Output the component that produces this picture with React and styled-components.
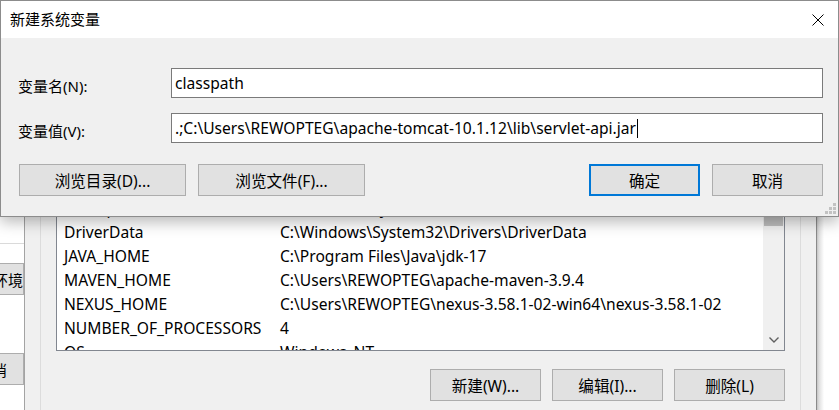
import React from "react"
import styled, { createGlobalStyle } from "styled-components"

const GlobalStyle = createGlobalStyle`
  html, body {
    margin: 0;
    padding: 0;
    background: #f0f0f0;
  }
  body {
    font-family: "Noto Sans", "Noto Sans CJK SC", sans-serif;
    font-size: 15.6px;
    color: #000;
  }
`

const Screen = styled.div`
  position: relative;
  display: flex;
  width: 839px;
  height: 410px;
  overflow: hidden;
`

/* ---------- windows behind the dialog ---------- */

const BackStrip = styled.div`
  width: 24px;
  flex-shrink: 0;
  display: flex;
  flex-direction: column;
  background: #fff;
  overflow: hidden;
  padding-top: 243px;
  box-sizing: border-box;
`
const BackLine = styled.div`
  height: 1px;
  background: #dadada;
  flex-shrink: 0;
`
const BackButton = styled.div`
  flex-shrink: 0;
  box-sizing: border-box;
  width: ${(p) => p.$w}px;
  height: 32px;
  margin-top: ${(p) => p.$top}px;
  margin-left: ${(p) => p.$shift}px;
  padding-left: ${(p) => p.$pad}px;
  display: flex;
  align-items: center;
  border: 1px solid #adadad;
  background: #e1e1e1;
  font-size: 15px;
  white-space: nowrap;
  overflow: hidden;
`

const EnvWindow = styled.div`
  width: 793px;
  flex-shrink: 0;
  box-sizing: border-box;
  border-left: 1px solid #a3a3a3;
  border-right: 1px solid #8a8a8a;
  background: #f0f0f0;
  padding: 0 15px;
`
const GroupBox = styled.div`
  height: 100%;
  box-sizing: border-box;
  border-left: 1px solid #dcdcdc;
  border-right: 1px solid #dcdcdc;
  padding: 195px 15px 0;
`
const ListBox = styled.div`
  display: flex;
  height: 156px;
  box-sizing: border-box;
  border: 1px solid #828790;
  background: #fff;
  overflow: hidden;
`
const Rows = styled.div`
  flex: 1;
  min-width: 0;
`
const Row = styled.div`
  display: grid;
  grid-template-columns: 216px 1fr;
  height: 24px;
  align-items: center;
  padding-left: 7px;
  white-space: nowrap;
`
const Scrollbar = styled.div`
  width: 21px;
  flex-shrink: 0;
  display: flex;
  flex-direction: column;
  background: #f0f0f0;
`
const Thumb = styled.div`
  height: 30px;
  margin: 0 1px;
  background: #bdbdbd;
`
const ArrowDown = styled.div`
  margin-top: auto;
  height: 21px;
  display: flex;
  align-items: center;
  justify-content: center;
`
const ButtonRow = styled.div`
  display: flex;
  justify-content: flex-end;
  gap: 11px;
  margin-top: 18px;
`
const Button = styled.div`
  box-sizing: border-box;
  width: ${(p) => p.$w || 111}px;
  height: 32px;
  display: flex;
  align-items: center;
  justify-content: center;
  background: #e1e1e1;
  border: ${(p) => (p.$default ? "2px solid #0078d7" : "1px solid #adadad")};
  white-space: nowrap;
`

const RightBack = styled.div`
  flex: 1;
  background: linear-gradient(to right, #c4c4c4 0, #dedede 2px, #ececec 4px, #f8f8f8 6px, #fff 7px);
`

/* ---------- the dialog ---------- */

const Dialog = styled.div`
  position: absolute;
  top: 0;
  left: 0;
  width: 839px;
  height: 217px;
  box-sizing: border-box;
  border: 1px solid #8c8c8c;
  background: #f0f0f0;
  box-shadow: 0 5px 14px rgba(0, 0, 0, 0.28);
  display: flex;
  flex-direction: column;
`
const TitleBar = styled.div`
  height: 37px;
  flex-shrink: 0;
  display: flex;
  align-items: center;
  justify-content: space-between;
  background: #fff;
  padding: 0 14px 0 9px;
`
const Title = styled.div`
  font-size: 15px;
  padding-bottom: 2px;
`
const Body = styled.div`
  flex: 1;
  padding: 30px 15px 0 18px;
`
const Fields = styled.div`
  display: grid;
  grid-template-columns: 152px 1fr;
  row-gap: 15px;
`
const Label = styled.div`
  display: flex;
  align-items: center;
  padding-top: 4px;
  margin-left: -1px;
  font-size: 15px;
`
const TextBox = styled.div`
  height: 30px;
  box-sizing: border-box;
  display: flex;
  align-items: center;
  padding-left: 3px;
  border: 1px solid #7a7a7a;
  background: #fff;
  white-space: nowrap;
`
const Caret = styled.span`
  display: inline-block;
  width: 1px;
  height: 19px;
  background: #000;
  margin-left: 1px;
`
const DialogButtons = styled.div`
  display: flex;
  gap: 12px;
  margin-top: 21px;
`
const Spacer = styled.div`
  flex: 1;
`
const Grip = styled.svg`
  position: absolute;
  right: 2px;
  bottom: 2px;
`

const vars = [
  ["ComSpec", "C:\\Windows\\system32\\cmd.exe"],
  ["DriverData", "C:\\Windows\\System32\\Drivers\\DriverData"],
  ["JAVA_HOME", "C:\\Program Files\\Java\\jdk-17"],
  ["MAVEN_HOME", "C:\\Users\\REWOPTEG\\apache-maven-3.9.4"],
  ["NEXUS_HOME", "C:\\Users\\REWOPTEG\\nexus-3.58.1-02-win64\\nexus-3.58.1-02"],
  ["NUMBER_OF_PROCESSORS", "4"],
  ["OS", "Windows_NT"],
]

const App = () => {
  return (
    <>
      <GlobalStyle />
      <Screen>
        <BackStrip>
          <BackLine />
          <BackButton $w={64} $top={19} $shift={-40} $pad={32}>
            环境变量(N)...
          </BackButton>
          <BackButton $w={88} $top={58} $shift={-64} $pad={40}>
            取消
          </BackButton>
        </BackStrip>

        <EnvWindow>
          <GroupBox>
            <ListBox>
              <Rows>
                {vars.map(([name, value]) => (
                  <Row key={name}>
                    <span>{name}</span>
                    <span>{value}</span>
                  </Row>
                ))}
              </Rows>
              <Scrollbar>
                <Thumb />
                <ArrowDown>
                  <svg width="10" height="6" viewBox="0 0 10 6">
                    <path d="M0.5 0.5 L5 5 L9.5 0.5" fill="none" stroke="#606060" strokeWidth="1.4" />
                  </svg>
                </ArrowDown>
              </Scrollbar>
            </ListBox>
            <ButtonRow>
              <Button>新建(W)...</Button>
              <Button>编辑(I)...</Button>
              <Button>删除(L)</Button>
            </ButtonRow>
          </GroupBox>
        </EnvWindow>

        <RightBack />

        <Dialog>
          <TitleBar>
            <Title>新建系统变量</Title>
            <svg width="12" height="12" viewBox="0 0 12 12">
              <path d="M0.5 0.5 L11.5 11.5 M11.5 0.5 L0.5 11.5" stroke="#000" strokeWidth="1" />
            </svg>
          </TitleBar>
          <Body>
            <Fields>
              <Label>变量名(N):</Label>
              <TextBox>classpath</TextBox>
              <Label>变量值(V):</Label>
              <TextBox>
                .;C:\Users\REWOPTEG\apache-tomcat-10.1.12\lib\servlet-api.jar
                <Caret />
              </TextBox>
            </Fields>
            <DialogButtons>
              <Button $w={167}>浏览目录(D)...</Button>
              <Button $w={167}>浏览文件(F)...</Button>
              <Spacer />
              <Button $default>确定</Button>
              <Button>取消</Button>
            </DialogButtons>
          </Body>
          <Grip width="11" height="11" viewBox="0 0 11 11">
            <rect x="8" y="0" width="3" height="3" fill="#c2c2c2" />
            <rect x="4" y="4" width="3" height="3" fill="#c2c2c2" />
            <rect x="8" y="4" width="3" height="3" fill="#c2c2c2" />
            <rect x="0" y="8" width="3" height="3" fill="#c2c2c2" />
            <rect x="4" y="8" width="3" height="3" fill="#c2c2c2" />
            <rect x="8" y="8" width="3" height="3" fill="#c2c2c2" />
          </Grip>
        </Dialog>
      </Screen>
    </>
  )
}

export default App
